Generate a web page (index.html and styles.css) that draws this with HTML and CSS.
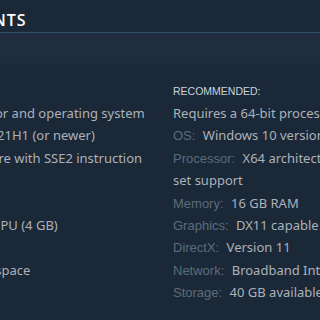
FILE: index.html
```
<html>
<head>
<link rel="stylesheet" href="styles.css">
<title>System Requirements</title>
</head>
<body>
    <div class="page">
        <h2 class="heading">System Requirements</h2>
        <div class="tabBand"></div>
        <div class="sysreq">
            <div class="col">
                <p class="colTitle">Minimum:</p>
                <ul class="reqList">
                    <li>Requires a 64-bit processor and operating system</li>
                    <li><span class="label">OS:</span> Windows 10 version 21H1 (or newer)</li>
                    <li><span class="label">Processor:</span> X64 architecture with SSE2 instruction set support</li>
                    <li><span class="label">Memory:</span> 8 GB RAM</li>
                    <li><span class="label">Graphics:</span> DX11 capable GPU (4 GB)</li>
                    <li><span class="label">DirectX:</span> Version 11</li>
                    <li><span class="label">Storage:</span> 40 GB available space</li>
                </ul>
            </div>
            <div class="col">
                <p class="colTitle">Recommended:</p>
                <ul class="reqList">
                    <li>Requires a 64-bit processor and operating system</li>
                    <li><span class="label">OS:</span> Windows 10 version 21H1 (or newer)</li>
                    <li><span class="label">Processor:</span> X64 architecture with SSE2 instruction set support</li>
                    <li><span class="label">Memory:</span> 16 GB RAM</li>
                    <li><span class="label">Graphics:</span> DX11 capable GPU (8 GB)</li>
                    <li><span class="label">DirectX:</span> Version 11</li>
                    <li><span class="label">Network:</span> Broadband Internet connection</li>
                    <li><span class="label">Storage:</span> 40 GB available space</li>
                </ul>
            </div>
        </div>
    </div>
</body>
</html>
```
FILE: styles.css
```
body {margin: 0;
      background-color: #1b2838;
      font-family: "Noto Sans", "Open Sans", sans-serif}
.page {width: 320px;
       height: 320px;
       overflow: hidden}
.heading {margin: 0;
          margin-left: -178px;
          height: 33px;
          box-sizing: border-box;
          padding-top: 9px;
          white-space: nowrap;
          font-family: "Open Sans", sans-serif;
          font-size: 16px;
          font-weight: 600;
          letter-spacing: 1px;
          line-height: 22px;
          text-transform: uppercase;
          color: #ffffff;
          border-bottom: 1px solid #2d4c66}
.tabBand {height: 30px;
          background-color: #1f2d3e;
          border-bottom: 1px solid #1d2a3a}
.sysreq {display: flex;
         gap: 21px;
         margin-left: -158px;
         padding-top: 16px}
.col {flex: 0 0 310px}
.colTitle {margin: 0;
           height: 22px;
           line-height: 22px;
           font-family: "Liberation Sans", Arial, sans-serif;
           font-size: 10.5px;
           text-transform: uppercase;
           color: #c6d4df}
.reqList {margin: 0;
          padding: 0;
          list-style: none;
          font-size: 13px;
          line-height: 22.4px;
          color: #acb2b8}
.label {font-family: "Liberation Sans", Arial, sans-serif;
        font-size: 13px;
        line-height: 1;
        color: #5c6c7b;
        margin-right: 4px}
```
